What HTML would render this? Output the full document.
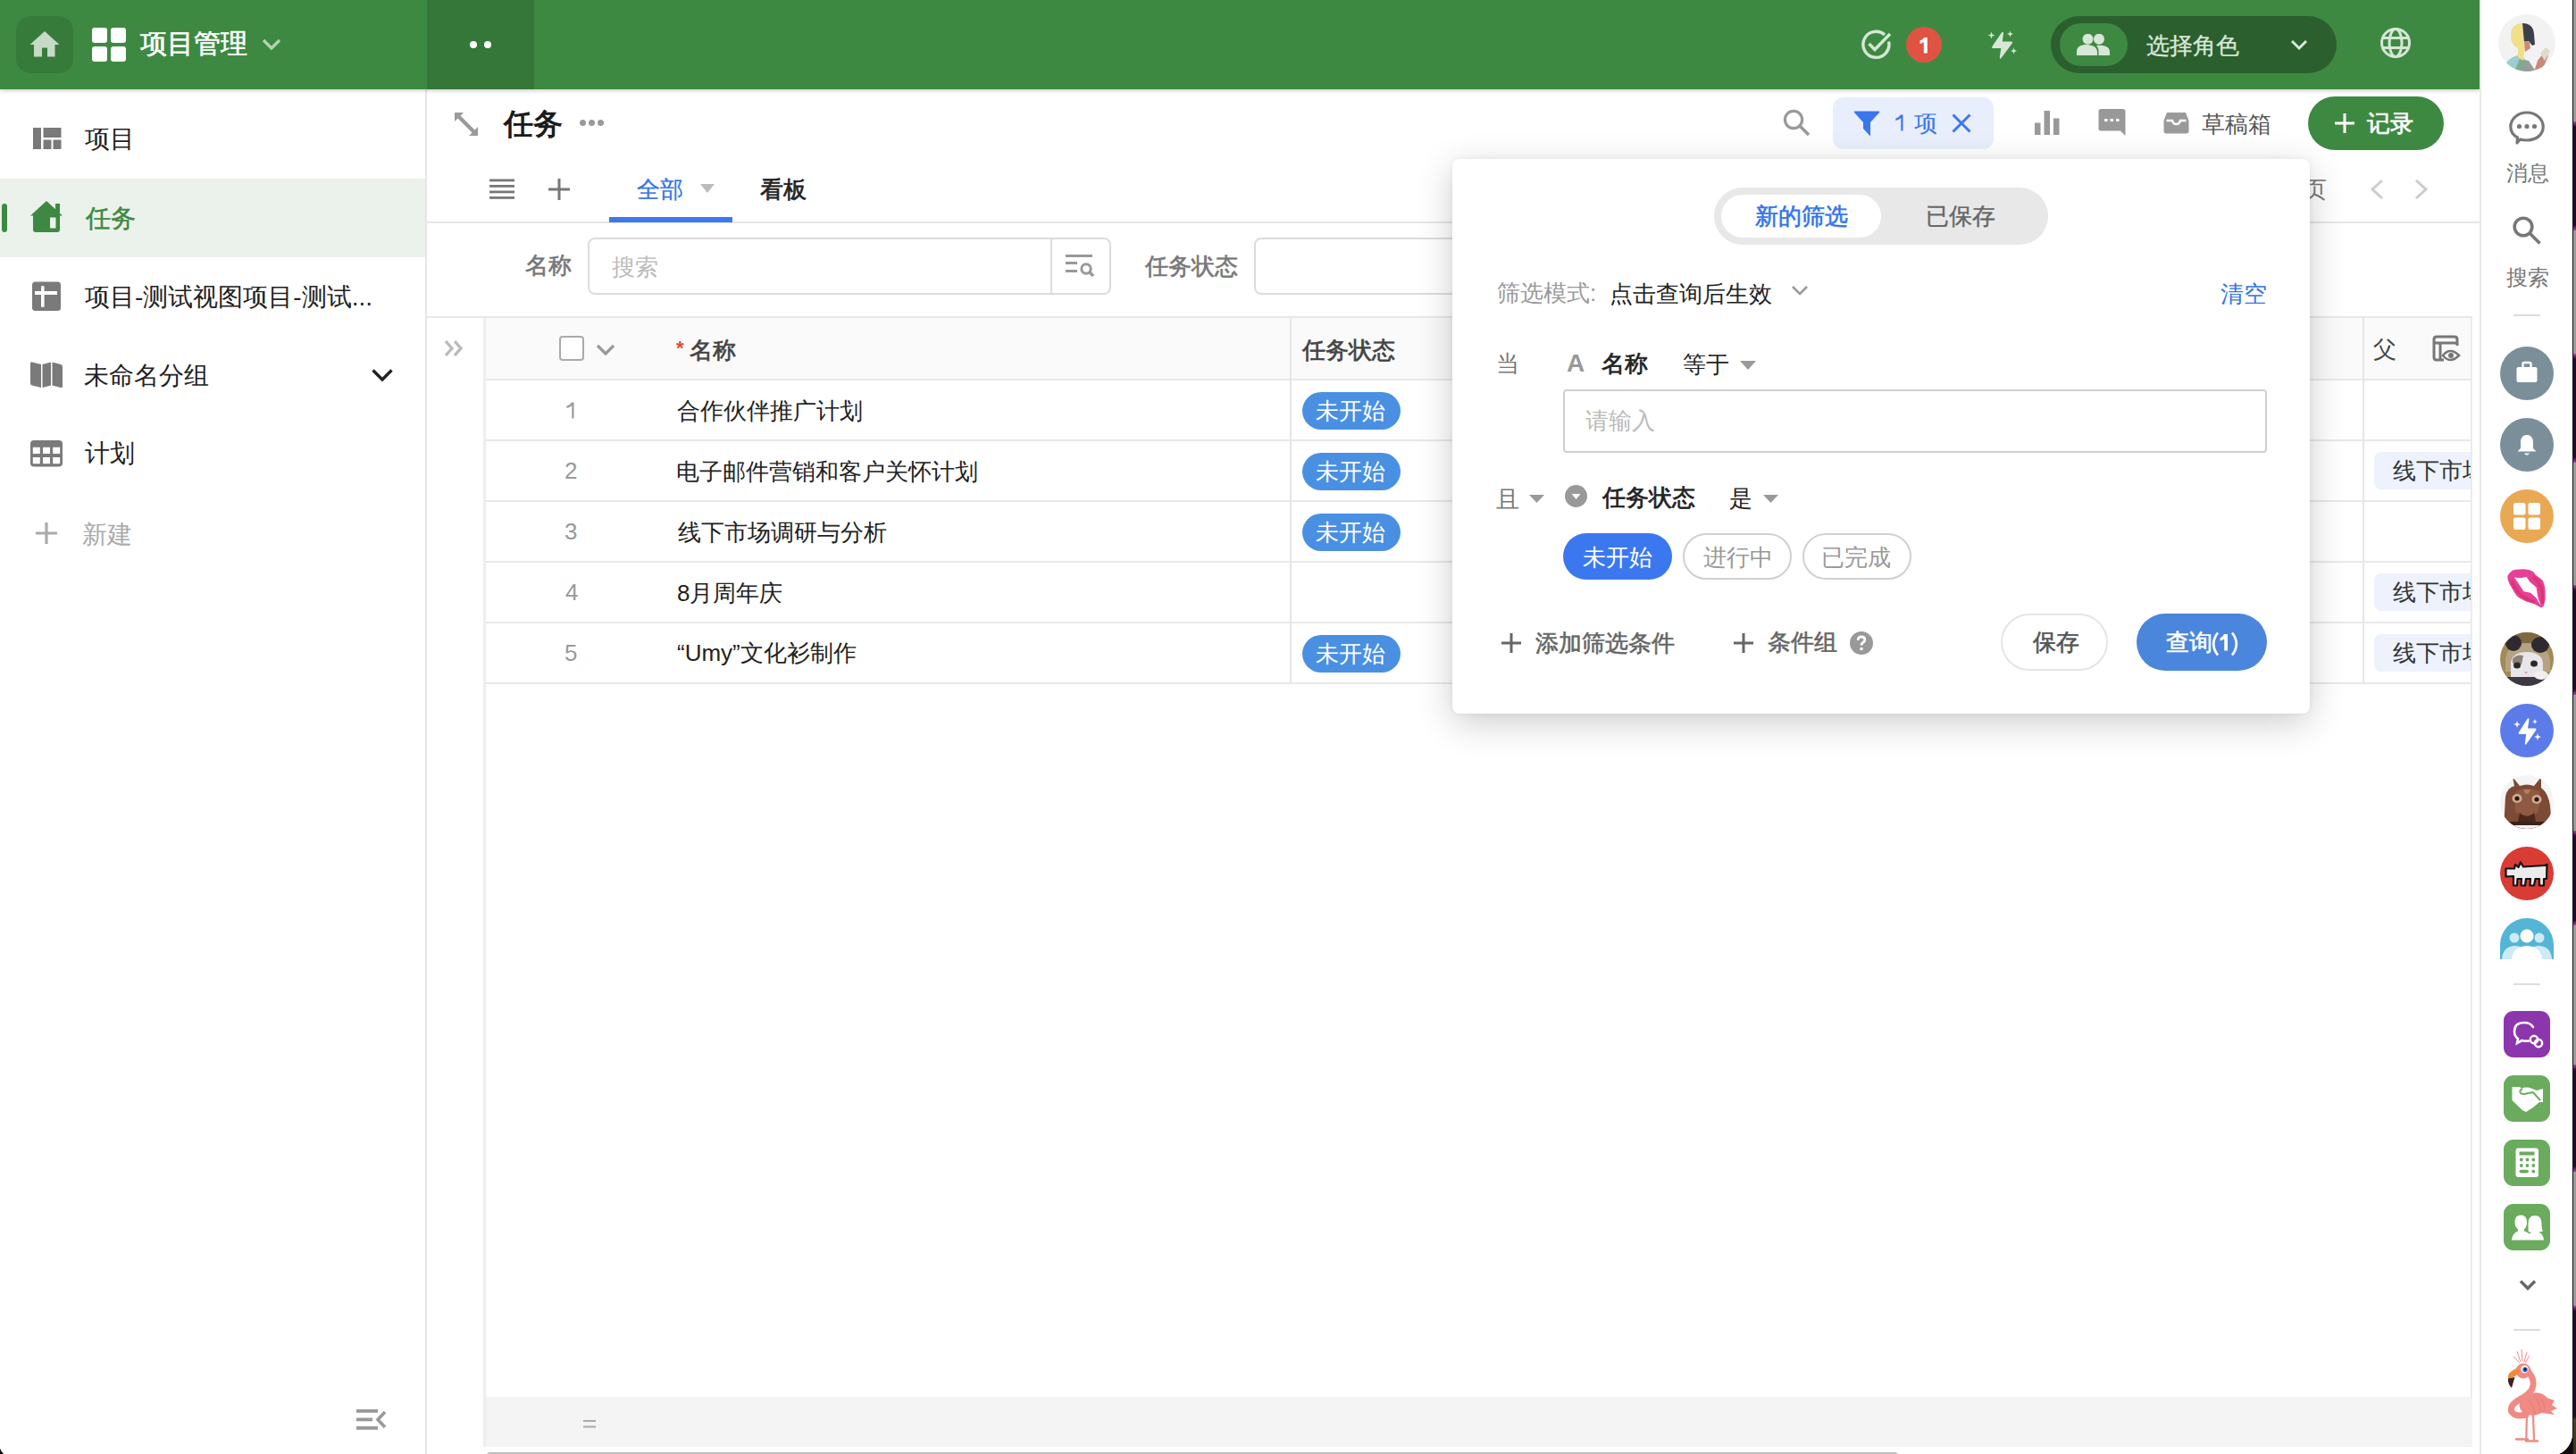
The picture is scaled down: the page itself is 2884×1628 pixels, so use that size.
<!DOCTYPE html>
<html><head><meta charset="utf-8">
<style>
*{box-sizing:border-box;margin:0;padding:0}
html,body{width:2884px;height:1628px;overflow:hidden;background:#120d0a}
body{font-family:"Liberation Sans",sans-serif;position:relative;color:#222}
.a{position:absolute}
.t{position:absolute;white-space:nowrap;line-height:1}
#win{position:absolute;left:0;top:0;width:2880px;height:1630px;background:#fff;border-radius:0 0 25px 11px;overflow:hidden}
#strip{position:absolute;left:2880px;top:0;width:4px;height:1628px;border-left:1px solid #111;background:linear-gradient(#9c9c9c 0,#9c9c9c 136px,#b040b8 136px,#230b2a 142px,#230b2a 252px,#b040b8 258px,#9c9c9c 258px,#9c9c9c 396px,#b040b8 396px,#230b2a 402px,#230b2a 512px,#b040b8 518px,#9c9c9c 518px,#9c9c9c 655px,#b040b8 655px,#230b2a 661px,#230b2a 772px,#b040b8 778px,#9c9c9c 778px,#9c9c9c 930px,#b040b8 930px,#230b2a 936px,#230b2a 1030px,#b040b8 1036px,#9c9c9c 1036px,#9c9c9c 1192px,#b040b8 1192px,#230b2a 1198px,#230b2a 1306px,#b040b8 1312px,#9c9c9c 1312px,#9c9c9c 1462px,#b040b8 1462px,#230b2a 1468px,#230b2a 1586px,#4a4226 1590px,#3a3420 1628px)}
</style></head><body>
<div id="win">
<div class="a" style="left:0;top:0;z-index:1">
<div class="a" style="left:0;top:100px;width:478px;height:1528px;background:#fff;border-right:2px solid #e6e6e6"></div>
<div class="a" style="left:0;top:200px;width:476px;height:88px;background:#eaf2eb"></div>
<div class="a" style="left:2px;top:228px;width:6px;height:32px;border-radius:3px;background:#3e8942"></div>
<svg class="a" style="left:37px;top:143px" width="32" height="25" viewBox="0 0 32 25"><g fill="#7a7a7a"><rect x="0" y="0" width="9" height="24"/><rect x="11.5" y="0" width="20" height="11"/><rect x="11.5" y="13.5" width="9" height="10.5"/><rect x="22.5" y="13.5" width="9" height="10.5"/></g></svg>
<svg class="a" style="left:34px;top:224px" width="37" height="37" viewBox="0 0 37 37"><path d="M18 1 L36 17.5 L33 17.5 L33 33 Q33 36 30 36 L6 36 Q3 36 3 33 L3 17.5 L0 17.5 Z" fill="#3e8942"/><rect x="28" y="4" width="5" height="10" fill="#3e8942"/><rect x="22" y="19.5" width="6.5" height="12" fill="#eaf2eb"/></svg>
<svg class="a" style="left:36px;top:315px" width="33" height="34" viewBox="0 0 33 34"><rect x="0" y="0.5" width="32" height="32.5" rx="3.5" fill="#7a7a7a"/><rect x="3" y="11" width="25" height="4" fill="#fff"/><rect x="10" y="5" width="3.6" height="24" rx="1.5" fill="#fff"/></svg>
<svg class="a" style="left:34px;top:405px" width="37" height="30" viewBox="0 0 37 30"><g fill="#7a7a7a"><path d="M0 1.5 Q0 0 2 0.5 L12 3 L12 29 L2 26.5 Q0 26 0 24Z"/><path d="M13.5 3 L23 0.5 L23 26.5 L13.5 29Z"/><path d="M24.5 0.5 L34 3 Q36 3.5 36 5.5 L36 27.5 Q36 29.5 34 29 L24.5 26.5Z"/></g></svg>
<svg class="a" style="left:415px;top:412px" width="26" height="17" viewBox="0 0 26 17"><path d="M2.5 2.5 L13 13 L23.5 2.5" fill="none" stroke="#222" stroke-width="3.4"/></svg>
<svg class="a" style="left:34px;top:493px" width="37" height="30" viewBox="0 0 37 30"><rect x="0" y="0" width="36" height="29.5" rx="4" fill="#7a7a7a"/><g fill="#fff"><rect x="2.8" y="7.8" width="8" height="7.2"/><rect x="14" y="7.8" width="8" height="7.2"/><rect x="25.2" y="7.8" width="8" height="7.2"/><rect x="2.8" y="19" width="8" height="7.2"/><rect x="14" y="19" width="8" height="7.2"/><rect x="25.2" y="19" width="8" height="7.2"/></g></svg>
<svg class="a" style="left:40px;top:585px" width="24" height="24" viewBox="0 0 24 24"><path d="M12 0 V24 M0 12 H24" stroke="#aaa" stroke-width="3.2"/></svg>
<svg class="a" style="left:399px;top:1578px" width="34" height="24" viewBox="0 0 34 24"><g fill="#999"><rect x="0" y="0" width="24" height="3.8"/><rect x="0" y="9.5" width="18" height="3.8"/><rect x="0" y="19" width="24" height="3.8"/></g><path d="M32 3 L24 11.5 L32 20" fill="none" stroke="#999" stroke-width="3.6"/></svg>

<svg class="a" style="left:508px;top:125px" width="28" height="28" viewBox="0 0 28 28"><g fill="#9a9a9a"><path d="M1 1 L11 1 L7.5 4.5 L23.5 20.5 L27 17 L27 27 L17 27 L20.5 23.5 L4.5 7.5 L1 11Z"/></g></svg>
<div class="a" style="left:649px;top:134px;width:7px;height:7px;border-radius:4px;background:#9a9a9a"></div>
<div class="a" style="left:659px;top:134px;width:7px;height:7px;border-radius:4px;background:#9a9a9a"></div>
<div class="a" style="left:669px;top:134px;width:7px;height:7px;border-radius:4px;background:#9a9a9a"></div>
<svg class="a" style="left:548px;top:200px" width="28" height="24" viewBox="0 0 28 24"><g fill="#777"><rect x="0" y="0.5" width="28" height="2.8"/><rect x="0" y="7" width="28" height="2.8"/><rect x="0" y="13.5" width="28" height="2.8"/><rect x="0" y="20" width="28" height="2.8"/></g></svg>
<svg class="a" style="left:614px;top:200px" width="24" height="24" viewBox="0 0 24 24"><path d="M12 0 V24 M0 12 H24" stroke="#777" stroke-width="3"/></svg>
<svg class="a" style="left:784px;top:206px" width="16" height="10" viewBox="0 0 16 10"><path d="M0 0 H16 L8 10Z" fill="#bbb"/></svg>
<div class="a" style="left:478px;top:248px;width:2298px;height:2px;background:#e6e6e6"></div>
<div class="a" style="left:682px;top:243px;width:138px;height:6px;background:#3b78f0"></div>
<div class="a" style="left:658px;top:266px;width:586px;height:64px;border:2px solid #dcdcdc;border-radius:8px"></div>
<div class="a" style="left:1176px;top:267px;width:2px;height:62px;background:#dcdcdc"></div>
<svg class="a" style="left:1193px;top:284px" width="36" height="27" viewBox="0 0 36 27"><g fill="#999"><rect x="0" y="1" width="30" height="3"/><rect x="0" y="9" width="13" height="3"/><rect x="0" y="18" width="13" height="3"/></g><circle cx="23" cy="17" r="5.2" fill="none" stroke="#999" stroke-width="3"/><path d="M26.5 20.5 L31 25" stroke="#999" stroke-width="3.4"/></svg>
<div class="a" style="left:1404px;top:266px;width:600px;height:64px;border:2px solid #dcdcdc;border-radius:8px"></div>
<svg class="a" style="left:2652px;top:200px" width="18" height="24" viewBox="0 0 18 24"><path d="M15 2 L4 12 L15 22" fill="none" stroke="#ccc" stroke-width="3"/></svg>
<svg class="a" style="left:2702px;top:200px" width="18" height="24" viewBox="0 0 18 24"><path d="M3 2 L14 12 L3 22" fill="none" stroke="#ccc" stroke-width="3"/></svg>
<div class="a" style="left:478px;top:354px;width:2290px;height:2px;background:#e8e8e8"></div>
<div class="a" style="left:544px;top:356px;width:2222px;height:68px;background:#fafafa"></div>
<div class="a" style="left:541px;top:356px;width:3px;height:1264px;background:#eeeeee"></div>
<div class="a" style="left:2766px;top:356px;width:2px;height:1208px;background:#ebebeb"></div>
<div class="a" style="left:544px;top:424px;width:2222px;height:2px;background:#e8e8e8"></div>
<svg class="a" style="left:497px;top:380px" width="24" height="20" viewBox="0 0 24 20"><path d="M2 2 L9 10 L2 18 M12 2 L19 10 L12 18" fill="none" stroke="#bbb" stroke-width="3.4"/></svg>
<div class="a" style="left:626px;top:376px;width:28px;height:28px;border:2px solid #aaa;border-radius:4px;background:#fff"></div>
<svg class="a" style="left:667px;top:385px" width="22" height="14" viewBox="0 0 22 14"><path d="M2 2 L11 11 L20 2" fill="none" stroke="#999" stroke-width="3.2"/></svg>
<div class="a" style="left:1444px;top:356px;width:2px;height:410px;background:#e6e6e6"></div>
<div class="a" style="left:2645px;top:356px;width:2px;height:410px;background:#e6e6e6"></div>
<svg class="a" style="left:2723px;top:375px" width="32" height="32" viewBox="0 0 32 32"><path d="M13 28 H5 Q2 28 2 25 V5 Q2 2 5 2 H25 Q28 2 28 5 V12" fill="none" stroke="#777" stroke-width="3"/><path d="M2 9 H28 M9 9 V28" fill="none" stroke="#777" stroke-width="3"/><path d="M12 23 Q20 13 30 23 Q20 33 12 23Z" fill="#fff" stroke="#777" stroke-width="2.6"/><circle cx="21" cy="23" r="3" fill="#777"/></svg>
<div class="a" style="left:544px;top:1564px;width:2224px;height:56px;background:#f4f4f4"></div>
<svg class="a" style="left:653px;top:1590px" width="14" height="9" viewBox="0 0 14 9"><path d="M0 1 H14 M0 7.5 H14" stroke="#aaa" stroke-width="1.8"/></svg>
<div class="a" style="left:544px;top:1626px;width:1582px;height:10px;border-radius:5px;background:#bdbdbd"></div>
<div class="a" style="left:544px;top:492px;width:2222px;height:2px;background:#e8e8e8"></div>
<svg class="a" style="left:634px;top:450px" width="9" height="19" viewBox="0 0 9 19"><path d="M6 0.5 H8.5 V18.5 H6.3 V4 Q4.5 5.8 0.3 7 V4.8 Q4.5 3.3 6 0.5Z" fill="#999"/></svg><div class="a" style="left:1458px;top:439px;width:110px;height:42px;border-radius:21px;background:#4a90e2"></div>
<div class="a" style="left:544px;top:560px;width:2222px;height:2px;background:#e8e8e8"></div>
<div class="a" style="left:1458px;top:507px;width:110px;height:42px;border-radius:21px;background:#4a90e2"></div>
<div class="a" style="left:2658px;top:506px;width:108px;height:42px;border-radius:8px 0 0 8px;background:#edf2fd"></div>
<div class="a" style="left:544px;top:628px;width:2222px;height:2px;background:#e8e8e8"></div>
<div class="a" style="left:1458px;top:575px;width:110px;height:42px;border-radius:21px;background:#4a90e2"></div>
<div class="a" style="left:544px;top:696px;width:2222px;height:2px;background:#e8e8e8"></div>
<div class="a" style="left:2658px;top:642px;width:108px;height:42px;border-radius:8px 0 0 8px;background:#edf2fd"></div>
<div class="a" style="left:544px;top:764px;width:2222px;height:2px;background:#e8e8e8"></div>
<div class="a" style="left:1458px;top:711px;width:110px;height:42px;border-radius:21px;background:#4a90e2"></div>
<div class="a" style="left:2658px;top:710px;width:108px;height:42px;border-radius:8px 0 0 8px;background:#edf2fd"></div>
<div class="t" style="left:95px;top:142.1px;font-size:28px;color:#222">项目</div>
<div class="t" style="left:96px;top:231.1px;font-size:28px;color:#3e8942;-webkit-text-stroke:0.5px #3e8942">任务</div>
<div class="t" style="left:95px;top:319.1px;font-size:28px;color:#222">项目-测试视图项目-测试...</div>
<div class="t" style="left:94px;top:407.1px;font-size:28px;color:#222">未命名分组</div>
<div class="t" style="left:95px;top:494.1px;font-size:28px;color:#222">计划</div>
<div class="t" style="left:92px;top:584.6px;font-size:28px;color:#aaa">新建</div>
<div class="t" style="left:564px;top:121.8px;font-size:33px;color:#1b1b1b;font-weight:bold">任务</div>
<div class="t" style="left:713px;top:198.7px;font-size:26px;color:#3574e8;-webkit-text-stroke:0.3px #3574e8">全部</div>
<div class="t" style="left:851px;top:198.7px;font-size:26px;color:#222;-webkit-text-stroke:0.7px #222">看板</div>
<div class="t" style="left:588px;top:284.2px;font-size:26px;color:#777;-webkit-text-stroke:0.6px #777">名称</div>
<div class="t" style="left:685px;top:285.7px;font-size:26px;color:#bbb">搜索</div>
<div class="t" style="left:1282px;top:284.7px;font-size:26px;color:#777;-webkit-text-stroke:0.6px #777">任务状态</div>
<div class="t" style="left:2579px;top:198.7px;font-size:26px;color:#777">页</div>
<div class="t" style="left:757px;top:379px;font-size:22px;color:#e0493a;font-weight:bold">*</div>
<div class="t" style="left:772px;top:379.2px;font-size:26px;color:#444;-webkit-text-stroke:0.7px #444">名称</div>
<div class="t" style="left:1458px;top:378.7px;font-size:26px;color:#444;-webkit-text-stroke:0.7px #444">任务状态</div>
<div class="t" style="left:2657px;top:378.2px;font-size:26px;color:#444">父</div>
<div class="t" style="left:758px;top:446.7px;font-size:26px;color:#222">合作伙伴推广计划</div>
<div class="t" style="left:1473px;top:446.7px;font-size:26px;color:#fff">未开始</div>
<div class="t" style="left:632px;top:514px;font-size:26px;color:#999">2</div>
<div class="t" style="left:757px;top:514.7px;font-size:26px;color:#222">电子邮件营销和客户关怀计划</div>
<div class="t" style="left:1473px;top:514.7px;font-size:26px;color:#fff">未开始</div>
<div class="a" style="left:2658px;top:503.70000000000005px;width:108px;height:46px;overflow:hidden"><div class="t" style="left:21px;top:10px;font-size:26px;color:#333">线下市场</div></div>
<div class="t" style="left:632px;top:582px;font-size:26px;color:#999">3</div>
<div class="t" style="left:759px;top:582.7px;font-size:26px;color:#222">线下市场调研与分析</div>
<div class="t" style="left:1473px;top:582.7px;font-size:26px;color:#fff">未开始</div>
<div class="t" style="left:633px;top:650px;font-size:26px;color:#999">4</div>
<div class="t" style="left:758px;top:650.7px;font-size:26px;color:#222">8月周年庆</div>
<div class="a" style="left:2658px;top:639.7px;width:108px;height:46px;overflow:hidden"><div class="t" style="left:21px;top:10px;font-size:26px;color:#333">线下市场</div></div>
<div class="t" style="left:632px;top:718px;font-size:26px;color:#999">5</div>
<div class="t" style="left:758px;top:718.2px;font-size:26px;color:#222">“Umy”文化衫制作</div>
<div class="t" style="left:1473px;top:718.7px;font-size:26px;color:#fff">未开始</div>
<div class="a" style="left:2658px;top:707.7px;width:108px;height:46px;overflow:hidden"><div class="t" style="left:21px;top:10px;font-size:26px;color:#333">线下市场</div></div>
</div>
<div class="a" style="left:1626px;top:178px;width:960px;height:621px;background:#fff;border-radius:8px;box-shadow:0 10px 40px rgba(0,0,0,.20),0 0 6px rgba(0,0,0,.06);z-index:4">
<div class="a" style="left:293px;top:32px;width:374px;height:64px;border-radius:32px;background:#e8e8e8"></div>
<div class="a" style="left:301px;top:40px;width:179px;height:48px;border-radius:24px;background:#fff"></div>
<svg class="a" style="left:379px;top:141px" width="20" height="13" viewBox="0 0 20 13"><path d="M2 2 L10 10 L18 2" fill="none" stroke="#999" stroke-width="2.6"/></svg>
<svg class="a" style="left:322px;top:226px" width="18" height="10" viewBox="0 0 18 10"><path d="M0 0 H18 L9 10Z" fill="#999"/></svg>
<div class="a" style="left:124px;top:258px;width:788px;height:71px;border:2px solid #cfcfcf;border-radius:4px"></div>
<svg class="a" style="left:86px;top:376px" width="17" height="9" viewBox="0 0 17 9"><path d="M0 0 H17 L8.5 9Z" fill="#999"/></svg>
<svg class="a" style="left:126px;top:365px" width="25" height="25" viewBox="0 0 25 25"><circle cx="12.5" cy="12.5" r="12.5" fill="#999"/><path d="M7.5 10 H17.5 L12.5 16Z" fill="#fff"/></svg>
<svg class="a" style="left:348px;top:376px" width="17" height="9" viewBox="0 0 17 9"><path d="M0 0 H17 L8.5 9Z" fill="#999"/></svg>
<div class="a" style="left:124px;top:419px;width:122px;height:52px;border-radius:26px;background:#3b78f0"></div>
<div class="a" style="left:258px;top:419px;width:122px;height:52px;border-radius:26px;border:2px solid #d0d0d0"></div>
<div class="a" style="left:392px;top:419px;width:122px;height:52px;border-radius:26px;border:2px solid #d0d0d0"></div>
<svg class="a" style="left:55px;top:531px" width="22" height="22" viewBox="0 0 22 22"><path d="M11 0 V22 M0 11 H22" stroke="#666" stroke-width="3"/></svg>
<svg class="a" style="left:315px;top:531px" width="22" height="22" viewBox="0 0 22 22"><path d="M11 0 V22 M0 11 H22" stroke="#666" stroke-width="3"/></svg>
<svg class="a" style="left:445px;top:529px" width="26" height="26" viewBox="0 0 26 26"><circle cx="13" cy="13" r="13" fill="#999"/><path d="M9.2 10 Q9.2 6 13 6 Q16.8 6 16.8 9.5 Q16.8 11.5 14.5 12.8 Q13 13.6 13 15.5" fill="none" stroke="#fff" stroke-width="2.8"/><circle cx="13" cy="19.5" r="1.8" fill="#fff"/></svg>
<div class="a" style="left:614px;top:509px;width:120px;height:64px;border-radius:32px;border:2px solid #e5e5e5"></div>
<div class="a" style="left:766px;top:509px;width:146px;height:64px;border-radius:32px;background:#4a86dc"></div>
<svg class="a" style="left:850px;top:529px" width="30" height="28" viewBox="0 0 30 28"><path d="M7 1.5 Q2.2 7.5 2.2 14 Q2.2 20.5 7 26.5 M23 1.5 Q27.8 7.5 27.8 14 Q27.8 20.5 23 26.5" fill="none" stroke="#fff" stroke-width="2.8"/><path d="M14 3 H18 V21.5 H14.2 V8.5 Q12 10 9.5 10.5 V7.3 Q12.5 6.5 14 3Z" fill="#fff"/></svg>
<div class="t" style="left:339px;top:50.7px;font-size:26px;color:#3574e8;-webkit-text-stroke:0.6px #3574e8">新的筛选</div>
<div class="t" style="left:530px;top:51.2px;font-size:26px;color:#666;-webkit-text-stroke:0.4px #666">已保存</div>
<div class="t" style="left:50px;top:137.2px;font-size:26px;color:#999">筛选模式:</div>
<div class="t" style="left:176px;top:137.7px;font-size:26px;color:#222">点击查询后生效</div>
<div class="t" style="left:860px;top:137.7px;font-size:26px;color:#3574e8">清空</div>
<div class="t" style="left:49px;top:216.2px;font-size:26px;color:#777">当</div>
<div class="t" style="left:128px;top:215px;font-size:28px;color:#999;font-weight:bold">A</div>
<div class="t" style="left:167px;top:216.2px;font-size:26px;color:#222;-webkit-text-stroke:0.7px #222">名称</div>
<div class="t" style="left:258px;top:217.2px;font-size:26px;color:#222">等于</div>
<div class="t" style="left:149px;top:279.7px;font-size:26px;color:#bbb">请输入</div>
<div class="t" style="left:49px;top:368.2px;font-size:26px;color:#777">且</div>
<div class="t" style="left:168px;top:366.2px;font-size:26px;color:#222;-webkit-text-stroke:0.7px #222">任务状态</div>
<div class="t" style="left:310px;top:367.2px;font-size:26px;color:#222">是</div>
<div class="t" style="left:146px;top:432.7px;font-size:26px;color:#fff">未开始</div>
<div class="t" style="left:281px;top:432.7px;font-size:26px;color:#999">进行中</div>
<div class="t" style="left:413px;top:433.2px;font-size:26px;color:#999">已完成</div>
<div class="t" style="left:93px;top:528.7px;font-size:26px;color:#666;-webkit-text-stroke:0.6px #666">添加筛选条件</div>
<div class="t" style="left:353px;top:528.2px;font-size:26px;color:#666;-webkit-text-stroke:0.6px #666">条件组</div>
<div class="t" style="left:650px;top:528.2px;font-size:26px;color:#555;-webkit-text-stroke:0.6px #555">保存</div>
<div class="t" style="left:799px;top:527.7px;font-size:26px;color:#fff;-webkit-text-stroke:0.6px #fff">查询</div>
</div>
<div class="a" style="left:0;top:0;z-index:3">
<svg class="a" style="left:1996px;top:122px" width="32" height="31" viewBox="0 0 32 31"><circle cx="12" cy="12" r="9.6" fill="none" stroke="#999" stroke-width="3.2"/><path d="M19 19 L29 29" stroke="#999" stroke-width="3.6"/></svg>
<div class="a" style="left:2052px;top:109px;width:180px;height:58px;border-radius:12px;background:#e8eefb"></div>
<svg class="a" style="left:2075px;top:124px" width="30" height="29" viewBox="0 0 30 29"><path d="M1.5 0.5 H28.5 Q30 0.5 29 2 L19 13 L19 28.5 L11 20 L11 13 L1 2 Q0 0.5 1.5 0.5Z" fill="#3a76f0"/></svg>
<svg class="a" style="left:2122px;top:128px" width="9" height="19" viewBox="0 0 9 19"><path d="M6 0.5 H8.5 V18.5 H6.3 V4 Q4.5 5.8 0.3 7 V4.8 Q4.5 3.3 6 0.5Z" fill="#3a76f0"/></svg>
<svg class="a" style="left:2185px;top:127px" width="22" height="22" viewBox="0 0 22 22"><path d="M1.5 1.5 L20.5 20.5 M20.5 1.5 L1.5 20.5" stroke="#3a76f0" stroke-width="3"/></svg>
<svg class="a" style="left:2278px;top:124px" width="28" height="27" viewBox="0 0 28 27"><g fill="#999"><rect x="0" y="13.5" width="6.5" height="13.5"/><rect x="10.5" y="0" width="6.5" height="27"/><rect x="21" y="8.5" width="6.5" height="18.5"/></g></svg>
<svg class="a" style="left:2349px;top:122px" width="31" height="30" viewBox="0 0 31 30"><path d="M3 0 H28 Q30.5 0 30.5 2.5 V30 L25 24.5 H3 Q0.5 24.5 0.5 22 V2.5 Q0.5 0 3 0Z" fill="#999"/><g fill="#fff"><rect x="7" y="11" width="3.5" height="3"/><rect x="13.5" y="11" width="3.5" height="3"/><rect x="20" y="11" width="3.5" height="3"/></g></svg>
<svg class="a" style="left:2422px;top:126px" width="29" height="24" viewBox="0 0 29 24"><path d="M4 0 H25 L28.5 9 V20.5 Q28.5 23.5 25.5 23.5 H3.5 Q0.5 23.5 0.5 20.5 V9Z" fill="#9a9a9a"/><path d="M3.5 9 H10 Q11 13 14.5 13 Q18 13 19 9 H25.5" fill="none" stroke="#fff" stroke-width="2.6"/></svg>
<div class="a" style="left:2584px;top:108px;width:152px;height:60px;border-radius:30px;background:#3e8942"></div>
<svg class="a" style="left:2614px;top:127px" width="22" height="22" viewBox="0 0 22 22"><path d="M11 0 V22 M0 11 H22" stroke="#fff" stroke-width="3"/></svg>
<div class="t" style="left:2143px;top:124.7px;font-size:26px;color:#3a76f0">项</div>
<div class="t" style="left:2465px;top:125.7px;font-size:26px;color:#555">草稿箱</div>
<div class="t" style="left:2650px;top:124.7px;font-size:26px;color:#fff;-webkit-text-stroke:0.7px #fff">记录</div>
</div>
<div class="a" style="left:0;top:0;z-index:5">
<div class="a" style="left:0;top:0;width:2776px;height:100px;background:#3e8942;box-shadow:0 2px 4px rgba(0,0,0,.18)"></div>
<div class="a" style="left:18px;top:18px;width:64px;height:64px;border-radius:16px;background:#367b3a"></div>
<svg class="a" style="left:33px;top:34px" width="34" height="30" viewBox="0 0 34 30"><path d="M17 1 L33.5 16 L28.5 16 L28.5 29.5 L20 29.5 L20 19.5 L14 19.5 L14 29.5 L5 29.5 L5 16 L0.5 16 Z" fill="#c6dac7"/></svg>
<svg class="a" style="left:103px;top:31px" width="38" height="38" viewBox="0 0 38 38"><rect x="0" y="0" width="17" height="17" rx="3" fill="#fff"/><rect x="21" y="0" width="17" height="17" rx="3" fill="#fff"/><rect x="0" y="21" width="17" height="17" rx="3" fill="#fff"/><rect x="21" y="21" width="17" height="17" rx="3" fill="#fff"/></svg>
<svg class="a" style="left:293px;top:43px" width="22" height="14" viewBox="0 0 22 14"><path d="M2 2 L11 11 L20 2" fill="none" stroke="#b5d2b6" stroke-width="3.2"/></svg>
<div class="a" style="left:478px;top:0;width:120px;height:100px;background:#357739"></div>
<div class="a" style="left:526px;top:46px;width:8px;height:8px;border-radius:4px;background:#fff"></div>
<div class="a" style="left:542px;top:46px;width:8px;height:8px;border-radius:4px;background:#fff"></div>
<svg class="a" style="left:2084px;top:32px" width="36" height="36" viewBox="0 0 36 36"><path d="M30.5 14.5 A14.5 14.5 0 1 1 26 7" fill="none" stroke="#d6e7d6" stroke-width="3.4"/><path d="M8.5 17 L15 23.5 L32 6" fill="none" stroke="#d6e7d6" stroke-width="3.4"/></svg>
<div class="a" style="left:2134px;top:30px;width:40px;height:40px;border-radius:20px;background:#e05343"></div>
<svg class="a" style="left:2149px;top:42px" width="10" height="18" viewBox="0 0 10 18"><path d="M5.2 0 H8.8 V17.5 H4.8 V5 Q3 6.5 0.5 7 V3.6 Q3.5 2.8 5.2 0Z" fill="#fff"/></svg>
<svg class="a" style="left:2225px;top:34px" width="34" height="33" viewBox="0 0 34 33"><path d="M16 2.5 Q17.5 1 18 3 L16.8 12.5 L27 12.5 Q28.8 13 27.8 14.5 L15.5 31 Q14 32.5 13.8 30.5 L15.2 20 L6 20 Q4.4 19.5 5.4 18Z" fill="#d6e7d6"/><path d="M4.5 1.5 L5.5 4.5 L8.5 5.5 L5.5 6.5 L4.5 9.5 L3.5 6.5 L0.5 5.5 L3.5 4.5Z" fill="#d6e7d6"/><path d="M25.5 0.5 L26.4 3.1 L29 4 L26.4 4.9 L25.5 7.5 L24.6 4.9 L22 4 L24.6 3.1Z" fill="#d6e7d6"/><path d="M29.5 19.5 L30.4 22.1 L33 23 L30.4 23.9 L29.5 26.5 L28.6 23.9 L26 23 L28.6 22.1Z" fill="#d6e7d6"/></svg>
<div class="a" style="left:2296px;top:18px;width:320px;height:64px;border-radius:32px;background:#2b5f2e"></div>
<div class="a" style="left:2306px;top:26px;width:76px;height:48px;border-radius:24px;background:#3e8942"></div>
<svg class="a" style="left:2325px;top:38px" width="38" height="24" viewBox="0 0 38 24"><circle cx="12.5" cy="5.8" r="6" fill="#d6e7d6"/><circle cx="25" cy="5.8" r="6" fill="#d6e7d6"/><path d="M0 24 L0 20 C0 14 5 12 10.5 12 C16 12 23 14 23 20 L23 24Z" fill="#d6e7d6"/><path d="M24.5 24 L24.5 19 C24.5 16.5 23.5 14.5 22 13 C28 12.3 37 13.5 37 19.5 L37 24Z" fill="#d6e7d6"/></svg>
<svg class="a" style="left:2564px;top:44px" width="20" height="13" viewBox="0 0 20 13"><path d="M2 2 L10 10 L18 2" fill="none" stroke="#dbe8db" stroke-width="3"/></svg>
<svg class="a" style="left:2664px;top:30px" width="36" height="36" viewBox="0 0 36 36"><g fill="none" stroke="#d6e7d6" stroke-width="3"><circle cx="18" cy="18" r="15.5"/><ellipse cx="18" cy="18" rx="7" ry="15.5"/><path d="M3 12.5 H33 M3 23.5 H33"/></g></svg>
<div class="t" style="left:157px;top:34.3px;font-size:29.5px;color:#fff;-webkit-text-stroke:0.6px #fff">项目管理</div>
<div class="t" style="left:2403px;top:37.7px;font-size:26px;color:#dbe8db;-webkit-text-stroke:0.3px #dbe8db">选择角色</div>
</div>
<div class="a" style="left:0;top:0;z-index:6"><div class="a" style="left:2776px;top:0;width:104px;height:1630px;background:#fff;border-left:2px solid #e8e8e8"></div>
<svg class="a" style="left:2797px;top:16px" width="64" height="64" viewBox="0 0 64 64"><defs><clipPath id="av"><circle cx="32" cy="32" r="32"/></clipPath></defs><g clip-path="url(#av)"><rect width="64" height="64" fill="#f2f2f2"/><path d="M4 64 Q10 48 22 46 L30 50 L34 64Z" fill="#9dcdd1"/><path d="M18 64 L24 50 L34 52 L42 64Z" fill="#86a796"/><path d="M28 64 L31 54 L36 55 L40 64Z" fill="#9b9b9b"/><path d="M14 22 Q15 10 27 10 L30 36 L28 52 L22 48 L22 38 Q13 34 14 22Z" fill="#f1e08a"/><path d="M27 10 Q39 10 40 22 L41 34 L38 35 L34 30 L29 31Z" fill="#3b4048"/><path d="M29 30 L35 31 L36 38 L30 42Z" fill="#c8897b"/><path d="M40 64 L44 52 L50 44 L56 46 L52 56 L46 64Z" fill="#c9887a"/><path d="M47 44 L53 37 L58 41 L52 52Z" fill="#dcdccc"/></g></svg>
<svg class="a" style="left:2809px;top:124px" width="40" height="40" viewBox="0 0 40 40"><path d="M9 36 L9.5 30 C4 27 1.8 22.5 1.8 18 C1.8 9 10 2 20 2 C30 2 38.2 9 38.2 18 C38.2 27 30 33 20 33 C17 33 14.5 32.8 12.5 32Z" fill="none" stroke="#777" stroke-width="3.2" stroke-linejoin="round"/><circle cx="11.5" cy="17.5" r="2.6" fill="#777"/><circle cx="20" cy="17.5" r="2.6" fill="#777"/><circle cx="28.5" cy="17.5" r="2.6" fill="#777"/></svg>
<svg class="a" style="left:2813px;top:242px" width="33" height="33" viewBox="0 0 33 33"><circle cx="12" cy="12" r="9.8" fill="none" stroke="#777" stroke-width="3.6"/><path d="M19 19 L30.5 30.5" stroke="#777" stroke-width="3.6"/></svg>
<div class="a" style="left:2814px;top:352px;width:30px;height:2px;background:#ddd"></div>
<div class="a" style="left:2799px;top:388px;width:60px;height:60px;border-radius:30px;background:#7b8f9b"></div>
<svg class="a" style="left:2814px;top:403px" width="30" height="30" viewBox="0 0 30 30"><path d="M10.5 8 V4.5 Q10.5 3 12 3 H18 Q19.5 3 19.5 4.5 V8" fill="none" stroke="#fff" stroke-width="2.4"/><rect x="3.5" y="8" width="23" height="17" rx="2" fill="#fff"/></svg>
<div class="a" style="left:2799px;top:468px;width:60px;height:60px;border-radius:30px;background:#7b8f9b"></div>
<svg class="a" style="left:2814px;top:483px" width="30" height="30" viewBox="0 0 30 30"><path d="M15 4 C9.5 4 8 8.5 8 12.5 L8 19 L4.5 22.5 L25.5 22.5 L22 19 L22 12.5 C22 8.5 20.5 4 15 4Z" fill="#fff"/><path d="M11.8 24.5 Q15 28.5 18.2 24.5Z" fill="#fff"/></svg>
<div class="a" style="left:2799px;top:548px;width:60px;height:60px;border-radius:30px;background:#e9a954"></div>
<svg class="a" style="left:2814px;top:563px" width="30" height="30" viewBox="0 0 30 30"><g fill="#fff"><rect x="0" y="0" width="13.5" height="13.5" rx="2.5"/><rect x="16.5" y="0" width="13.5" height="13.5" rx="2.5"/><rect x="0" y="16.5" width="13.5" height="13.5" rx="2.5"/><rect x="16.5" y="16.5" width="13.5" height="13.5" rx="2.5"/></g></svg>
<svg class="a" style="left:2796px;top:626px" width="66" height="66" viewBox="0 0 66 66"><path fill-rule="evenodd" d="M11.3 19 L13.6 15.4 Q17 12 20.4 11.8 L29.5 11.3 Q36 11.5 40 14 L43 18 L47.7 21.3 Q51 23.5 51.7 26.3 Q53.5 31 53.6 36.3 L53.6 45.4 L51.7 52.7 L49 54.5 L40.9 50 L31.8 47.2 L24.5 43.6 Q21 41 19 37.2 L13.6 28 Q11 23 11.3 19Z M19 20.4 L25.4 21.3 L32.7 20 L36.3 25.4 L43.6 31.8 L45.4 43 L49 53 L43.6 43.6 L37.2 37.7 L29.5 36.3 L25.4 30 Z" fill="#e5409a"/><path d="M16 24 Q20 34 26 40 Q34 46 42 48 M40 20 Q48 26 50 36 Q51 44 50 50" fill="none" stroke="#de2d5e" stroke-width="3.5" opacity=".7"/></svg>
<svg class="a" style="left:2799px;top:708px" width="60" height="60" viewBox="0 0 60 60"><defs><clipPath id="c1"><circle cx="30" cy="30" r="30"/></clipPath></defs><g clip-path="url(#c1)"><rect width="60" height="60" fill="#a08a58"/><rect x="0" y="0" width="60" height="14" fill="#7d6a40"/><path d="M6 30 Q8 12 30 12 Q52 12 56 30 L56 44 L6 44Z" fill="#b6a383"/><ellipse cx="15" cy="12" rx="9" ry="9" fill="#2e2a30"/><ellipse cx="45" cy="14" rx="10" ry="9" fill="#2e2a30"/><path d="M12 34 Q14 22 30 22 Q46 22 48 34 L48 52 L12 52Z" fill="#e8e6ea"/><path d="M14 30 Q18 24 26 26 L24 36 Q18 38 14 34Z" fill="#8c8278"/><ellipse cx="19" cy="37" rx="4" ry="3.6" fill="#2a2a2a"/><ellipse cx="38" cy="35" rx="4" ry="3.6" fill="#2a2a2a"/><path d="M27 44 L31 44 L29 47Z" fill="#e0a0a8"/><rect x="0" y="50" width="60" height="10" fill="#3c3844"/><ellipse cx="46" cy="48" rx="8" ry="5" fill="#efefef"/></g></svg>
<div class="a" style="left:2799px;top:788px;width:60px;height:60px;border-radius:30px;background:#5b7be9"></div>
<svg class="a" style="left:2812px;top:800px" width="34" height="36" viewBox="0 0 34 36"><path d="M17.5 5 Q19 3.5 19.5 5.5 L18 15.5 L26.5 15.5 Q28.3 16 27.3 17.5 L16.5 33 Q15 34.5 14.8 32.5 L16.2 22 L8.5 22 Q6.9 21.5 7.9 20Z" fill="#fff"/><path d="M6 7 L7 10 L10 11 L7 12 L6 15 L5 12 L2 11 L5 10Z" fill="#fff"/><path d="M26 5 L26.8 7.2 L29 8 L26.8 8.8 L26 11 L25.2 8.8 L23 8 L25.2 7.2Z" fill="#fff"/><path d="M29 21 L30 24 L33 25 L30 26 L29 29 L28 26 L25 25 L28 24Z" fill="#fff"/></svg>
<svg class="a" style="left:2799px;top:868px" width="60" height="60" viewBox="0 0 60 60"><defs><clipPath id="c2"><circle cx="30" cy="30" r="30"/></clipPath></defs><g clip-path="url(#c2)"><rect width="60" height="60" fill="#f4f4f4"/><path d="M4 60 L6 24 Q8 14 16 12 L14 2 L22 12 Q30 9 38 12 L46 2 L46 14 Q54 20 56 34 L58 60Z" fill="#7d4a35"/><path d="M18 18 Q30 12 44 18 Q46 30 42 42 Q30 48 18 42 Q14 30 18 18Z" fill="#8f5a42"/><path d="M26 16 Q30 26 34 16Z" fill="#b08060"/><ellipse cx="19" cy="26" rx="5.5" ry="5" fill="#d2ad8c"/><ellipse cx="41" cy="27" rx="5.5" ry="5" fill="#d2ad8c"/><circle cx="19" cy="26" r="2.6" fill="#2a1a14"/><circle cx="41" cy="27" r="2.6" fill="#2a1a14"/><path d="M22 42 Q30 50 38 42 L40 52 L20 52Z" fill="#4a281c"/><rect x="0" y="52" width="60" height="8" fill="#3a2418"/><rect x="0" y="56" width="60" height="4" fill="#f4f4f4"/></g></svg>
<div class="a" style="left:2799px;top:948px;width:60px;height:60px;border-radius:30px;background:#d93b35"></div>
<svg class="a" style="left:2804px;top:964px" width="50" height="30" viewBox="0 0 50 30"><path d="M1.5 8.5 L11 8.5 L12 4 L15.5 7 L18 1.5 L21 6.5 L45 5 L47.5 4 L47 20 L44 20 L44 27.5 L39 27.5 L39 20 L34.5 20 L33 27.5 L28.5 27.5 L29 20 L24 20 L23 27.5 L18.5 27.5 L19 20 L14.5 20 L14 27.5 L10 27.5 L10 17 L1.5 17.5Z" fill="#ececec" stroke="#111" stroke-width="2.2" stroke-linejoin="round"/></svg>
<div class="a" style="left:2799px;top:1028px;width:60px;height:46px;border-radius:30px 30px 0 0;background:#55b5d6;overflow:hidden"><svg width="60" height="46" viewBox="0 0 60 46"><g fill="#cdebf4"><circle cx="16" cy="22" r="5.5"/><path d="M2 46 Q3 32 16 31 Q22 31 25 34 L22 46Z"/><circle cx="44" cy="22" r="5.5"/><path d="M58 46 Q57 32 44 31 Q38 31 35 34 L38 46Z"/></g><circle cx="30" cy="20" r="7.5" fill="#fff"/><path d="M13 46 Q14 32 30 31 Q46 32 47 46Z" fill="#fff"/></svg></div>
<div class="a" style="left:2814px;top:1101px;width:30px;height:2px;background:#ddd"></div>
<div class="a" style="left:2803px;top:1132px;width:52px;height:52px;border-radius:11px;background:#8d35ad"></div>
<svg class="a" style="left:2811px;top:1142px" width="38" height="34" viewBox="0 0 38 34"><path d="M25 8 Q22 3 15 3 Q4 3 4 13 Q4 18 8 21 L7 26 L12.5 23 Q15.5 24 20 23.5" fill="none" stroke="#fff" stroke-width="2.6" stroke-linecap="round"/><circle cx="26" cy="22" r="4.2" fill="none" stroke="#fff" stroke-width="2.4"/><circle cx="31" cy="26" r="4.2" fill="none" stroke="#fff" stroke-width="2.4"/></svg>
<div class="a" style="left:2803px;top:1204px;width:52px;height:52px;border-radius:11px;background:#6aab5e"></div>
<svg class="a" style="left:2812px;top:1216px" width="36" height="30" viewBox="0 0 36 30"><path d="M0.5 1 L9 1 L11 2.5 Q17 0.5 23 3 L28 5 L35 3 L35 18 L31 18 L24 24 L16 29 L12 27 L0.5 16Z" fill="#fff"/><path d="M12 3 Q8 5 10 8 Q13 10 18 8 L24 7 L32 16" fill="none" stroke="#6aab5e" stroke-width="2"/></svg>
<div class="a" style="left:2803px;top:1276px;width:52px;height:52px;border-radius:11px;background:#6aab5e"></div>
<svg class="a" style="left:2816px;top:1285px" width="27" height="34" viewBox="0 0 27 34"><rect x="0.5" y="0.5" width="25.5" height="32.5" rx="3" fill="#fff"/><rect x="4.5" y="4.5" width="17" height="4" fill="#6aab5e"/><g fill="#6aab5e"><circle cx="6.8" cy="13.5" r="1.9"/><circle cx="13.5" cy="13.5" r="1.9"/><circle cx="20.3" cy="13.5" r="1.9"/><circle cx="6.8" cy="20" r="1.9"/><circle cx="13.5" cy="20" r="1.9"/><circle cx="20.3" cy="20" r="1.9"/><rect x="4.5" y="24.8" width="10.5" height="3.6" rx="1.8"/><circle cx="20.3" cy="26.6" r="1.9"/></g></svg>
<div class="a" style="left:2803px;top:1348px;width:52px;height:52px;border-radius:11px;background:#6aab5e"></div>
<svg class="a" style="left:2812px;top:1360px" width="36" height="30" viewBox="0 0 36 30"><g fill="#fff"><path d="M10 0.5 Q17 0.5 17 8.5 Q17 14 14 16.5 L14 18.5 Q19 20 20 22 Q17 24 16 28.5 L0 28.5 Q0.5 21 7 18.5 L7 16.5 Q3.5 14 3.5 8.5 Q3.5 0.5 10 0.5Z"/><path d="M26 1 Q33.5 1 33.5 10 Q33.5 16 35 18.5 Q32 19.5 30 19.5 Q35.5 21.5 36 28.5 L16 28.5 Q17 22 22 20 Q20 19.5 18.5 18.5 Q18.5 16 18.5 10 Q18.5 1 26 1Z"/></g></svg>
<svg class="a" style="left:2820px;top:1432px" width="20" height="14" viewBox="0 0 20 14"><path d="M2 2.5 L10 10.5 L18 2.5" fill="none" stroke="#666" stroke-width="3.4"/></svg>
<div class="a" style="left:2814px;top:1488px;width:30px;height:2px;background:#ddd"></div>
<svg class="a" style="left:2800px;top:1508px" width="70" height="110" viewBox="0 0 70 110"><path d="M22 17 L18 5 M24 16 L23 3 M26 17 L29 6 M27 18 L32 10 M21 18 L14 11" stroke="#f08a86" stroke-width="1" fill="none"/><ellipse cx="37" cy="64" rx="16.5" ry="12.5" transform="rotate(-12 37 64)" fill="#f08a84"/><path d="M48 56 L60 60 L57 65 L63 69 L56 72 L60 76 L46 74Z" fill="#f08a84"/><path d="M30 27 Q39 37 35 47 Q31 54 21 59 Q10 65 11.5 72 Q15 79 28 76" fill="none" stroke="#f08a84" stroke-width="7" stroke-linecap="round"/><circle cx="25" cy="27" r="8.5" fill="#f08a84"/><path d="M36 54 Q44 60 44 72 M30 60 Q38 66 38 76 M42 54 Q50 62 48 72" fill="none" stroke="#e06a66" stroke-width="0.9" opacity=".6"/><circle cx="26.5" cy="25" r="4.2" fill="#fff"/><circle cx="27" cy="25.5" r="2.7" fill="#2a5aa8"/><circle cx="27.3" cy="25.2" r="1.1" fill="#111"/><path d="M18 24 Q12 26 9 30 Q7 33 8 36 L16 33 Q19 30 21 27Z" fill="#f28a3a"/><path d="M8 35.5 Q7.5 42 12 46 L15.5 34Z" fill="#3b2420"/><path d="M29 75 L28.3 103 M36 76 L37 105" stroke="#f08a84" stroke-width="2.2" fill="none"/><path d="M17 103.5 L30 103.5 M28 105.5 L41 105.5" stroke="#f08a84" stroke-width="2.6" stroke-linecap="round" fill="none"/></svg>
<div class="t" style="left:2806px;top:181.8px;font-size:24px;color:#777">消息</div>
<div class="t" style="left:2806px;top:298.8px;font-size:24px;color:#777">搜索</div>
</div>
</div>
<div id="strip"></div>
</body></html>
